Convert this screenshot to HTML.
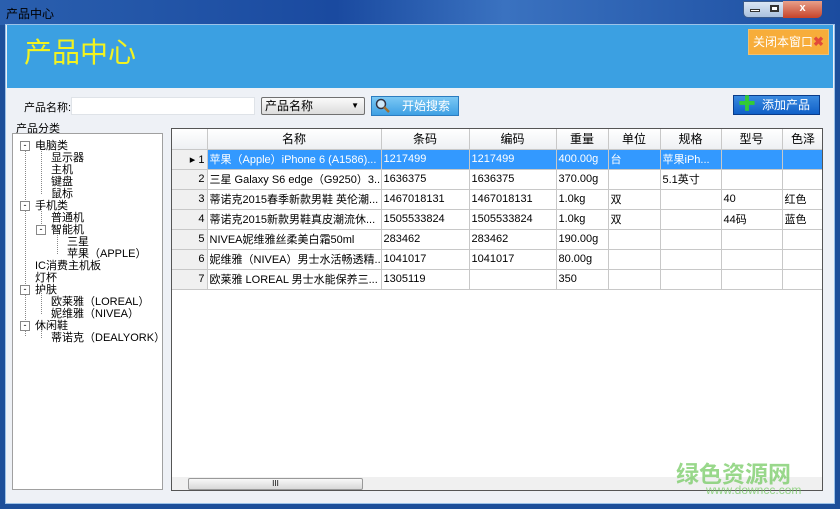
<!DOCTYPE html>
<html><head><meta charset="utf-8"><style>
*{margin:0;padding:0;box-sizing:border-box}
body{width:840px;height:509px;overflow:hidden;font-family:"Liberation Sans","Noto Sans CJK SC",sans-serif;font-size:12px;background:#1d4f9a;position:relative}
.abs{position:absolute}
.title{left:0;top:0;width:840px;height:25px;background:linear-gradient(90deg,#2a5fae,#1a4aa0 40%,#3a72c0 60%,#1b4c9f);}
.frame{left:5px;top:24px;width:830px;height:480px;background:#eef1f6;border:1px solid #9cc2e8}
.hdr{left:7px;top:25px;width:826px;height:63px;background:#3ba0e2}
td,th{border-right:1px solid #c8c8c8;border-bottom:1px solid #c8c8c8;height:20px;padding:0 2px;white-space:nowrap;overflow:hidden;font-weight:normal;font-size:11px}
table{border-collapse:collapse;table-layout:fixed}
th{background:linear-gradient(#fff,#eef0f3);font-size:12px}
.sel td{background:#3399ff;color:#fff}
.tree div{position:absolute;font-size:11px;line-height:12px;white-space:nowrap}
.tree .ln{border-left:1px dotted #888;width:0}
.tree .h{border-top:1px dotted #888;height:0}
</style></head><body>
<div class="abs title"></div>
<div class="abs" style="left:6px;top:5px;font-size:12px;color:#000">产品中心</div>
<div class="abs" style="left:743px;top:1px;width:79px;height:17px;border:1px solid #3a5a8a;border-radius:0 0 5px 5px;background:linear-gradient(#dbe6f4,#a9c0de);"></div>
<div class="abs" style="left:783px;top:1px;width:39px;height:17px;border-radius:0 0 5px 0;background:linear-gradient(#e8a08a,#c6432a);color:#fff;font-weight:bold;text-align:center;font-size:11px;line-height:15px">x</div>
<div class="abs" style="left:750px;top:9px;width:10px;height:3px;background:#fff;border:1px solid #333"></div>
<div class="abs" style="left:770px;top:5px;width:9px;height:7px;border:2px solid #333;background:#fff"></div>
<div class="abs frame"></div>
<div class="abs hdr"></div>
<div class="abs" style="left:24px;top:36px;font-size:28px;color:#f2f220;line-height:34px">产品中心</div>
<div class="abs" style="left:748px;top:29px;width:81px;height:26px;background:#f7ad3a;border:1px solid #f0c070;color:#fff;font-size:12px;line-height:24px;padding-left:4px;white-space:nowrap">关闭本窗口<span style="position:absolute;left:64px;top:0;color:#e24a3a;font-weight:bold;font-size:13px">✖</span></div>
<div class="abs" style="left:24px;top:99px;font-size:11px;white-space:nowrap">产品名称:</div>
<div class="abs" style="left:71px;top:97px;width:184px;height:18px;background:#fff;border:1px solid #dfe3e8"></div>
<div class="abs" style="left:261px;top:97px;width:104px;height:18px;background:linear-gradient(#fafafa,#dcdcdc);border:1px solid #707070;border-radius:2px;padding-left:3px;line-height:16px">产品名称<span style="position:absolute;right:5px;top:0;font-size:8px">▼</span></div>
<div class="abs" style="left:371px;top:96px;width:88px;height:20px;background:linear-gradient(#7cc8f4,#3ea0e4);border:1px solid #2c7cc0;color:#fff;line-height:18px;padding-left:30px">开始搜索</div>
<svg class="abs" style="left:375px;top:98px" width="16" height="16"><circle cx="6" cy="6" r="4.5" fill="#cfe8f8" stroke="#334" stroke-width="1.5"/><path d="M9 9l5 5" stroke="#a07030" stroke-width="2.5"/></svg>
<div class="abs" style="left:733px;top:95px;width:87px;height:20px;background:linear-gradient(#3a8ae0,#1060c8);border:1px solid #0a3c8a;color:#fff;line-height:18px;padding-left:28px">添加产品</div>
<div class="abs" style="left:738px;top:97px;width:14px;height:14px;color:#3c3;font-weight:bold;font-size:18px;line-height:14px">✚</div>
<div class="abs" style="left:16px;top:120px;font-size:11px">产品分类</div>
<div class="abs tree" style="left:12px;top:133px;width:151px;height:357px;background:#fff;border:1px solid #a0a0a0">
<div class="ln" style="left:12px;top:12px;height:190px"></div>
<div class="ln" style="left:28px;top:12px;height:48px"></div>
<div class="ln" style="left:28px;top:72px;height:24px"></div>
<div class="ln" style="left:44px;top:96px;height:24px"></div>
<div class="ln" style="left:28px;top:156px;height:24px"></div>
<div class="ln" style="left:28px;top:192px;height:12px"></div>
<div style="left:22px;top:6px">电脑类</div><div style="left:38px;top:18px">显示器</div><div style="left:38px;top:30px">主机</div><div style="left:38px;top:42px">键盘</div><div style="left:38px;top:54px">鼠标</div>
<div style="left:22px;top:66px">手机类</div><div style="left:38px;top:78px">普通机</div><div style="left:38px;top:90px">智能机</div><div style="left:54px;top:102px">三星</div><div style="left:54px;top:114px">苹果（APPLE）</div>
<div style="left:22px;top:126px">IC消费主机板</div><div style="left:22px;top:138px">灯杯</div><div style="left:22px;top:150px">护肤</div><div style="left:38px;top:162px">欧莱雅（LOREAL）</div><div style="left:38px;top:174px">妮维雅（NIVEA）</div><div style="left:22px;top:186px">休闲鞋</div><div style="left:38px;top:198px">蒂诺克（DEALYORK）</div>
<div style="left:7px;top:7px;width:10px;height:10px;border:1px solid #888;background:#fff;font-size:9px;line-height:7px;text-align:center">-</div>
<div style="left:7px;top:67px;width:10px;height:10px;border:1px solid #888;background:#fff;font-size:9px;line-height:7px;text-align:center">-</div>
<div style="left:23px;top:91px;width:10px;height:10px;border:1px solid #888;background:#fff;font-size:9px;line-height:7px;text-align:center">-</div>
<div style="left:7px;top:151px;width:10px;height:10px;border:1px solid #888;background:#fff;font-size:9px;line-height:7px;text-align:center">-</div>
<div style="left:7px;top:187px;width:10px;height:10px;border:1px solid #888;background:#fff;font-size:9px;line-height:7px;text-align:center">-</div>
</div>
<div class="abs" style="left:171px;top:128px;width:652px;height:363px;background:#fff;border:1px solid #555;overflow:hidden">
<table style="width:651px">
<colgroup><col style="width:35px"><col style="width:174px"><col style="width:88px"><col style="width:87px"><col style="width:52px"><col style="width:52px"><col style="width:61px"><col style="width:61px"><col style="width:42px"></colgroup>
<tr><th></th><th>名称</th><th>条码</th><th>编码</th><th>重量</th><th>单位</th><th>规格</th><th>型号</th><th>色泽</th></tr>
<tr class="sel"><td style="background:#f0f0f0;color:#000;text-align:right">▸ 1</td><td>苹果（Apple）iPhone 6 (A1586)...</td><td>1217499</td><td>1217499</td><td>400.00g</td><td>台</td><td>苹果iPh...</td><td></td><td></td></tr>
<tr><td style="background:#f0f0f0;text-align:right">2</td><td>三星 Galaxy S6 edge（G9250）3...</td><td>1636375</td><td>1636375</td><td>370.00g</td><td></td><td>5.1英寸</td><td></td><td></td></tr>
<tr><td style="background:#f0f0f0;text-align:right">3</td><td>蒂诺克2015春季新款男鞋 英伦潮...</td><td>1467018131</td><td>1467018131</td><td>1.0kg</td><td>双</td><td></td><td>40</td><td>红色</td></tr>
<tr><td style="background:#f0f0f0;text-align:right">4</td><td>蒂诺克2015新款男鞋真皮潮流休...</td><td>1505533824</td><td>1505533824</td><td>1.0kg</td><td>双</td><td></td><td>44码</td><td>蓝色</td></tr>
<tr><td style="background:#f0f0f0;text-align:right">5</td><td>NIVEA妮维雅丝柔美白霜50ml</td><td>283462</td><td>283462</td><td>190.00g</td><td></td><td></td><td></td><td></td></tr>
<tr><td style="background:#f0f0f0;text-align:right">6</td><td>妮维雅（NIVEA）男士水活畅透精...</td><td>1041017</td><td>1041017</td><td>80.00g</td><td></td><td></td><td></td><td></td></tr>
<tr><td style="background:#f0f0f0;text-align:right">7</td><td>欧莱雅 LOREAL 男士水能保养三...</td><td>1305119</td><td></td><td>350</td><td></td><td></td><td></td><td></td></tr>
</table>
<div class="abs" style="left:0;top:348px;width:651px;height:14px;background:#f0f0f0"></div>
<div class="abs" style="left:16px;top:349px;width:175px;height:12px;background:linear-gradient(#f8f8f8,#d8d8d8);border:1px solid #999;border-radius:2px;text-align:center;font-size:8px;line-height:10px">III</div>
</div>
<div class="abs" style="left:676px;top:455px;font-size:23px;font-weight:bold;color:rgba(110,200,90,.7)">绿色资源网</div>
<div class="abs" style="left:706px;top:483px;font-size:12px;color:rgba(110,200,90,.7)">www.downcc.com</div>
</body></html>
